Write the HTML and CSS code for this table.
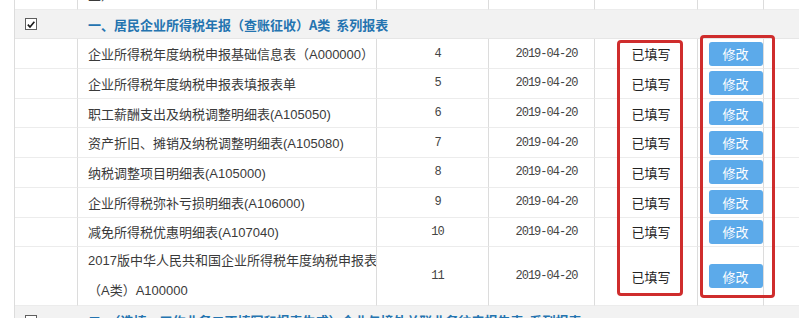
FILE: index.html
```html
<!DOCTYPE html>
<html lang="zh-CN">
<head>
<meta charset="utf-8">
<title>居民企业所得税年报</title>
<link rel="stylesheet" href="styles.css">
</head>
<body>
<div class="page">
  <div class="grid">
    <div class="row">
      <div class="cell"></div>
      <div class="cell name">业）</div>
      <div class="cell"></div><div class="cell"></div><div class="cell"></div><div class="cell"></div><div class="cell last"></div>
    </div>

    <div class="row group">
      <div class="cell chk"><span class="box"><svg viewBox="0 0 11 11" width="11" height="11"><path d="M2 5.6 L4.4 8.2 L9.2 2.4" fill="none" stroke="#1a1a1a" stroke-width="1.8"/></svg></span></div>
      <div class="cell title">一、居民企业所得税年报（查账征收）A类&nbsp;&nbsp;系列报表</div>
    </div>

    <div class="row">
      <div class="cell"></div>
      <div class="cell name">企业所得税年度纳税申报基础信息表（A000000）</div>
      <div class="cell num">4</div>
      <div class="cell num">2019-04-20</div>
      <div class="cell status">已填写</div>
      <div class="cell act"><button class="btn">修改</button></div>
      <div class="cell last"></div>
    </div>
    <div class="row">
      <div class="cell"></div>
      <div class="cell name">企业所得税年度纳税申报表填报表单</div>
      <div class="cell num">5</div>
      <div class="cell num">2019-04-20</div>
      <div class="cell status">已填写</div>
      <div class="cell act"><button class="btn">修改</button></div>
      <div class="cell last"></div>
    </div>
    <div class="row">
      <div class="cell"></div>
      <div class="cell name">职工薪酬支出及纳税调整明细表(A105050)</div>
      <div class="cell num">6</div>
      <div class="cell num">2019-04-20</div>
      <div class="cell status">已填写</div>
      <div class="cell act"><button class="btn">修改</button></div>
      <div class="cell last"></div>
    </div>
    <div class="row">
      <div class="cell"></div>
      <div class="cell name">资产折旧、摊销及纳税调整明细表(A105080)</div>
      <div class="cell num">7</div>
      <div class="cell num">2019-04-20</div>
      <div class="cell status">已填写</div>
      <div class="cell act"><button class="btn">修改</button></div>
      <div class="cell last"></div>
    </div>
    <div class="row">
      <div class="cell"></div>
      <div class="cell name">纳税调整项目明细表(A105000)</div>
      <div class="cell num">8</div>
      <div class="cell num">2019-04-20</div>
      <div class="cell status">已填写</div>
      <div class="cell act"><button class="btn">修改</button></div>
      <div class="cell last"></div>
    </div>
    <div class="row">
      <div class="cell"></div>
      <div class="cell name">企业所得税弥补亏损明细表(A106000)</div>
      <div class="cell num">9</div>
      <div class="cell num">2019-04-20</div>
      <div class="cell status">已填写</div>
      <div class="cell act"><button class="btn">修改</button></div>
      <div class="cell last"></div>
    </div>
    <div class="row">
      <div class="cell"></div>
      <div class="cell name">减免所得税优惠明细表(A107040)</div>
      <div class="cell num">10</div>
      <div class="cell num">2019-04-20</div>
      <div class="cell status">已填写</div>
      <div class="cell act"><button class="btn">修改</button></div>
      <div class="cell last"></div>
    </div>
    <div class="row tall">
      <div class="cell"></div>
      <div class="cell name wrap"><span class="lines">2017版中华人民共和国企业所得税年度纳税申报表<br>（A类）A100000</span></div>
      <div class="cell num">11</div>
      <div class="cell num">2019-04-20</div>
      <div class="cell status">已填写</div>
      <div class="cell act"><button class="btn">修改</button></div>
      <div class="cell last"></div>
    </div>

    <div class="row group">
      <div class="cell chk"><span class="box"></span></div>
      <div class="cell title">二、（选填，工作业务二不填写和报表生成）企业与境外关联业务往来报告表&nbsp;&nbsp;系列报表</div>
    </div>
  </div>

  <div class="mark mark-status"></div>
  <div class="mark mark-action"></div>
</div>
</body>
</html>
```

FILE: styles.css
```css
html, body {
  margin: 0;
  padding: 0;
  background: #ffffff;
  overflow: hidden;
}

body {
  font-family: "Liberation Sans", "Noto Sans CJK SC", sans-serif;
  font-size: 13px;
  color: #333333;
}

.page {
  position: relative;
  display: flow-root;
  width: 799px;
  height: 318px;
  overflow: hidden;
}

.grid {
  margin-top: -20px;
  margin-left: 14px;
  width: 840px;
  border-left: 1px solid #dcdcdc;
}

.row {
  display: grid;
  grid-template-columns: 63px 299px 112px 106px 103px 66px 90px;
  grid-template-rows: 100%;
  height: 29.7px;
}

.row.tall {
  height: 59px;
}

.cell {
  box-sizing: border-box;
  border-right: 1px solid #dcdcdc;
  border-bottom: 1px solid #ececec;
  display: flex;
  align-items: center;
  min-width: 0;
  min-height: 0;
  white-space: nowrap;
  overflow: hidden;
}

.cell.last {
  border-right: none;
}

.name {
  padding-left: 10px;
  color: #3a3a3a;
}

.name.wrap {
  line-height: 30px;
}

.lines {
  display: block;
  white-space: nowrap;
}

.num {
  justify-content: center;
  padding-left: 10px;
  font-family: "Liberation Mono", monospace;
  font-size: 12px;
  letter-spacing: -1px;
  color: #444444;
}

.status {
  justify-content: center;
  padding-left: 10px;
  font-family: "Noto Sans CJK SC", sans-serif;
  color: #222222;
}

.act {
  justify-content: center;
  padding-left: 10px;
}

.btn {
  width: 54px;
  height: 24px;
  border: none;
  border-radius: 3px;
  background: #5caaea;
  color: #ffffff;
  font-family: "Noto Sans CJK SC", sans-serif;
  font-size: 13px;
  padding: 0;
}

.group {
  background: #f2f2f2;
  grid-template-columns: 63px 1fr;
}

.group .cell {
  border-right: none;
  border-bottom: 1px solid #e6e6e6;
}

.chk {
  padding-left: 10px;
}

.box {
  box-sizing: border-box;
  width: 12px;
  height: 12px;
  border: 1px solid #5e5e5e;
  background: #ffffff;
  display: flex;
  align-items: center;
  justify-content: center;
}

.title {
  padding-left: 10px;
  font-family: "Noto Sans CJK SC", sans-serif;
  font-weight: bold;
  color: #2474b0;
}

.mark {
  position: absolute;
  box-sizing: border-box;
  border: 3px solid #cf2d2d;
  border-radius: 4px;
}

.mark-status {
  left: 617px;
  top: 40px;
  width: 66px;
  height: 256px;
}

.mark-action {
  left: 700px;
  top: 35px;
  width: 75px;
  height: 263px;
}
```
